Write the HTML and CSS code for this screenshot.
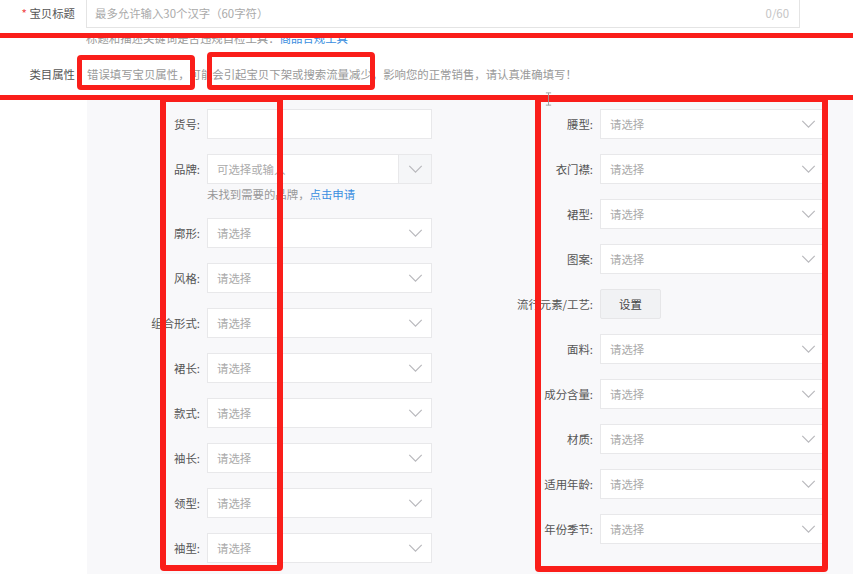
FILE: index.html
```html
<!DOCTYPE html>
<html lang="zh-CN">
<head>
<meta charset="utf-8">
<title>宝贝编辑</title>
<link rel="stylesheet" href="styles.css">
</head>
<body>
<div class="page">
  <div class="form">
    <div class="title-row">
      <div class="row-label"><span class="req">*</span> 宝贝标题</div>
      <div class="title-input">
        <span class="ph">最多允许输入30个汉字（60字符）</span>
        <span class="count">0/60</span>
      </div>
    </div>
    <div class="title-hint">标题和描述关键词是否违规自检工具：<a class="link">商品合规工具</a></div>
    <div class="attr-row">
      <div class="row-label">类目属性</div>
      <div class="warn">错误填写宝贝属性，可能会引起宝贝下架或搜索流量减少，影响您的正常销售，请认真准确填写！</div>
    </div>
    <div class="panel">
      <div class="col">
        <div class="field"><div class="f-label">货号:</div><div class="input"></div></div>
        <div class="field">
          <div class="f-label">品牌:</div>
          <div class="f-body">
            <div class="input combo"><span class="ph combo-text">可选择或输入</span><span class="combo-btn"><svg class="chev" viewBox="0 0 16 9"><polyline points="1,1 8,8 15,1"/></svg></span></div>
            <div class="brand-hint">未找到需要的品牌，<a class="link">点击申请</a></div>
          </div>
        </div>
        <div class="field"><div class="f-label">廓形:</div><div class="input select"><span class="ph">请选择</span><svg class="chev" viewBox="0 0 16 9"><polyline points="1,1 8,8 15,1"/></svg></div></div>
        <div class="field"><div class="f-label">风格:</div><div class="input select"><span class="ph">请选择</span><svg class="chev" viewBox="0 0 16 9"><polyline points="1,1 8,8 15,1"/></svg></div></div>
        <div class="field"><div class="f-label">组合形式:</div><div class="input select"><span class="ph">请选择</span><svg class="chev" viewBox="0 0 16 9"><polyline points="1,1 8,8 15,1"/></svg></div></div>
        <div class="field"><div class="f-label">裙长:</div><div class="input select"><span class="ph">请选择</span><svg class="chev" viewBox="0 0 16 9"><polyline points="1,1 8,8 15,1"/></svg></div></div>
        <div class="field"><div class="f-label">款式:</div><div class="input select"><span class="ph">请选择</span><svg class="chev" viewBox="0 0 16 9"><polyline points="1,1 8,8 15,1"/></svg></div></div>
        <div class="field"><div class="f-label">袖长:</div><div class="input select"><span class="ph">请选择</span><svg class="chev" viewBox="0 0 16 9"><polyline points="1,1 8,8 15,1"/></svg></div></div>
        <div class="field"><div class="f-label">领型:</div><div class="input select"><span class="ph">请选择</span><svg class="chev" viewBox="0 0 16 9"><polyline points="1,1 8,8 15,1"/></svg></div></div>
        <div class="field"><div class="f-label">袖型:</div><div class="input select"><span class="ph">请选择</span><svg class="chev" viewBox="0 0 16 9"><polyline points="1,1 8,8 15,1"/></svg></div></div>
      </div>
      <div class="col">
        <div class="field"><div class="f-label">腰型:</div><div class="input select"><span class="ph">请选择</span><svg class="chev" viewBox="0 0 16 9"><polyline points="1,1 8,8 15,1"/></svg></div></div>
        <div class="field"><div class="f-label">衣门襟:</div><div class="input select"><span class="ph">请选择</span><svg class="chev" viewBox="0 0 16 9"><polyline points="1,1 8,8 15,1"/></svg></div></div>
        <div class="field"><div class="f-label">裙型:</div><div class="input select"><span class="ph">请选择</span><svg class="chev" viewBox="0 0 16 9"><polyline points="1,1 8,8 15,1"/></svg></div></div>
        <div class="field"><div class="f-label">图案:</div><div class="input select"><span class="ph">请选择</span><svg class="chev" viewBox="0 0 16 9"><polyline points="1,1 8,8 15,1"/></svg></div></div>
        <div class="field"><div class="f-label">流行元素/工艺:</div><div class="btn">设置</div></div>
        <div class="field"><div class="f-label">面料:</div><div class="input select"><span class="ph">请选择</span><svg class="chev" viewBox="0 0 16 9"><polyline points="1,1 8,8 15,1"/></svg></div></div>
        <div class="field"><div class="f-label">成分含量:</div><div class="input select"><span class="ph">请选择</span><svg class="chev" viewBox="0 0 16 9"><polyline points="1,1 8,8 15,1"/></svg></div></div>
        <div class="field"><div class="f-label">材质:</div><div class="input select"><span class="ph">请选择</span><svg class="chev" viewBox="0 0 16 9"><polyline points="1,1 8,8 15,1"/></svg></div></div>
        <div class="field"><div class="f-label">适用年龄:</div><div class="input select"><span class="ph">请选择</span><svg class="chev" viewBox="0 0 16 9"><polyline points="1,1 8,8 15,1"/></svg></div></div>
        <div class="field"><div class="f-label">年份季节:</div><div class="input select"><span class="ph">请选择</span><svg class="chev" viewBox="0 0 16 9"><polyline points="1,1 8,8 15,1"/></svg></div></div>
      </div>
    </div>
  </div>

  <div class="mark mark-band"></div>
  <div class="mark mark-w1"></div>
  <div class="mark mark-w2"></div>
  <div class="mark mark-left"></div>
  <div class="mark mark-right"></div>
  <svg class="cursor" viewBox="0 0 8 16"><path d="M1 1h6M4 1v14M1 15h6"/></svg>
</div>
</body>
</html>
```
FILE: styles.css
```css
html, body {
  margin: 0;
  padding: 0;
  background: #fff;
}
.page {
  position: relative;
  width: 853px;
  height: 574px;
  overflow: hidden;
  font-family: "Noto Sans CJK SC", "Noto Sans", sans-serif;
  font-size: 11.4px;
  color: #444;
}
.form {
  margin-top: -2px;
}
.title-row {
  display: flex;
  height: 30px;
}
.row-label {
  width: 86px;
  box-sizing: border-box;
  padding-right: 11px;
  text-align: right;
  line-height: 30px;
  color: #555;
  flex-shrink: 0;
}
.req {
  color: #f04848;
}
.title-input {
  width: 714px;
  box-sizing: border-box;
  border: 1px solid #e4e4e4;
  background: #fff;
  display: flex;
  align-items: center;
  justify-content: space-between;
  padding: 0 10px 0 8px;
}
.ph {
  color: #aaa;
}
.count {
  color: #c4c4c4;
}
.title-hint {
  margin-top: 3px;
  padding-left: 86px;
  line-height: 14px;
  color: #999;
}
.link {
  color: #3a8ee0;
  text-decoration: none;
}
.attr-row {
  display: flex;
  margin-top: 21px;
  line-height: 16px;
}
.attr-row .row-label {
  line-height: 16px;
}
.warn {
  padding-left: 1px;
  color: #999;
}
.panel {
  margin-left: 87px;
  margin-top: 14px;
  background: #f8f8fa;
  padding-top: 13px;
  display: grid;
  grid-template-columns: 345px 345px;
  column-gap: 48px;
  height: 480px;
}
.field {
  display: flex;
  align-items: flex-start;
  margin-bottom: 15px;
}
.f-label {
  width: 120px;
  box-sizing: border-box;
  padding-right: 7px;
  text-align: right;
  line-height: 30px;
  color: #555;
  white-space: nowrap;
  flex-shrink: 0;
}
.f-body {
  display: flex;
  flex-direction: column;
}
.input {
  width: 225px;
  height: 30px;
  box-sizing: border-box;
  border: 1px solid #e8e8ea;
  background: #fff;
}
.select {
  display: flex;
  align-items: center;
  justify-content: space-between;
  padding: 0 8px 0 9px;
}
.combo {
  display: flex;
  align-items: stretch;
}
.combo-text {
  flex: 1;
  padding-left: 9px;
  line-height: 28px;
}
.combo-btn {
  width: 32px;
  border-left: 1px solid #e8e8ea;
  background: #f5f6f8;
  display: flex;
  align-items: center;
  justify-content: center;
}
.chev {
  width: 15px;
  height: 8px;
  fill: none;
  stroke: #b8b8bc;
  stroke-width: 1.3;
}
.brand-hint {
  margin-top: 2px;
  line-height: 17px;
  color: #999;
}
.btn {
  width: 61px;
  height: 30px;
  box-sizing: border-box;
  border: 1px solid #e6e6e8;
  border-radius: 2px;
  background: #f1f2f4;
  line-height: 28px;
  text-align: center;
  color: #444;
}
.mark {
  position: absolute;
  box-sizing: border-box;
  border: 5px solid #fa1e1a;
}
.mark-band {
  left: -8px;
  top: 33px;
  width: 869px;
  height: 67px;
}
.mark-w1 {
  left: 77px;
  top: 55px;
  width: 118px;
  height: 35px;
  border-radius: 4px;
}
.mark-w2 {
  left: 207px;
  top: 52px;
  width: 168px;
  height: 38px;
  border-radius: 4px;
}
.mark-left {
  left: 160px;
  top: 96px;
  width: 123px;
  height: 475px;
  border-width: 6px;
  border-radius: 0 0 4px 4px;
}
.mark-right {
  left: 535px;
  top: 96px;
  width: 293px;
  height: 476px;
  border-width: 6px;
  border-radius: 0 0 4px 4px;
}
.cursor {
  position: absolute;
  left: 545px;
  top: 92px;
  width: 7px;
  height: 14px;
  fill: none;
  stroke: #999;
  stroke-width: 1;
}
```
